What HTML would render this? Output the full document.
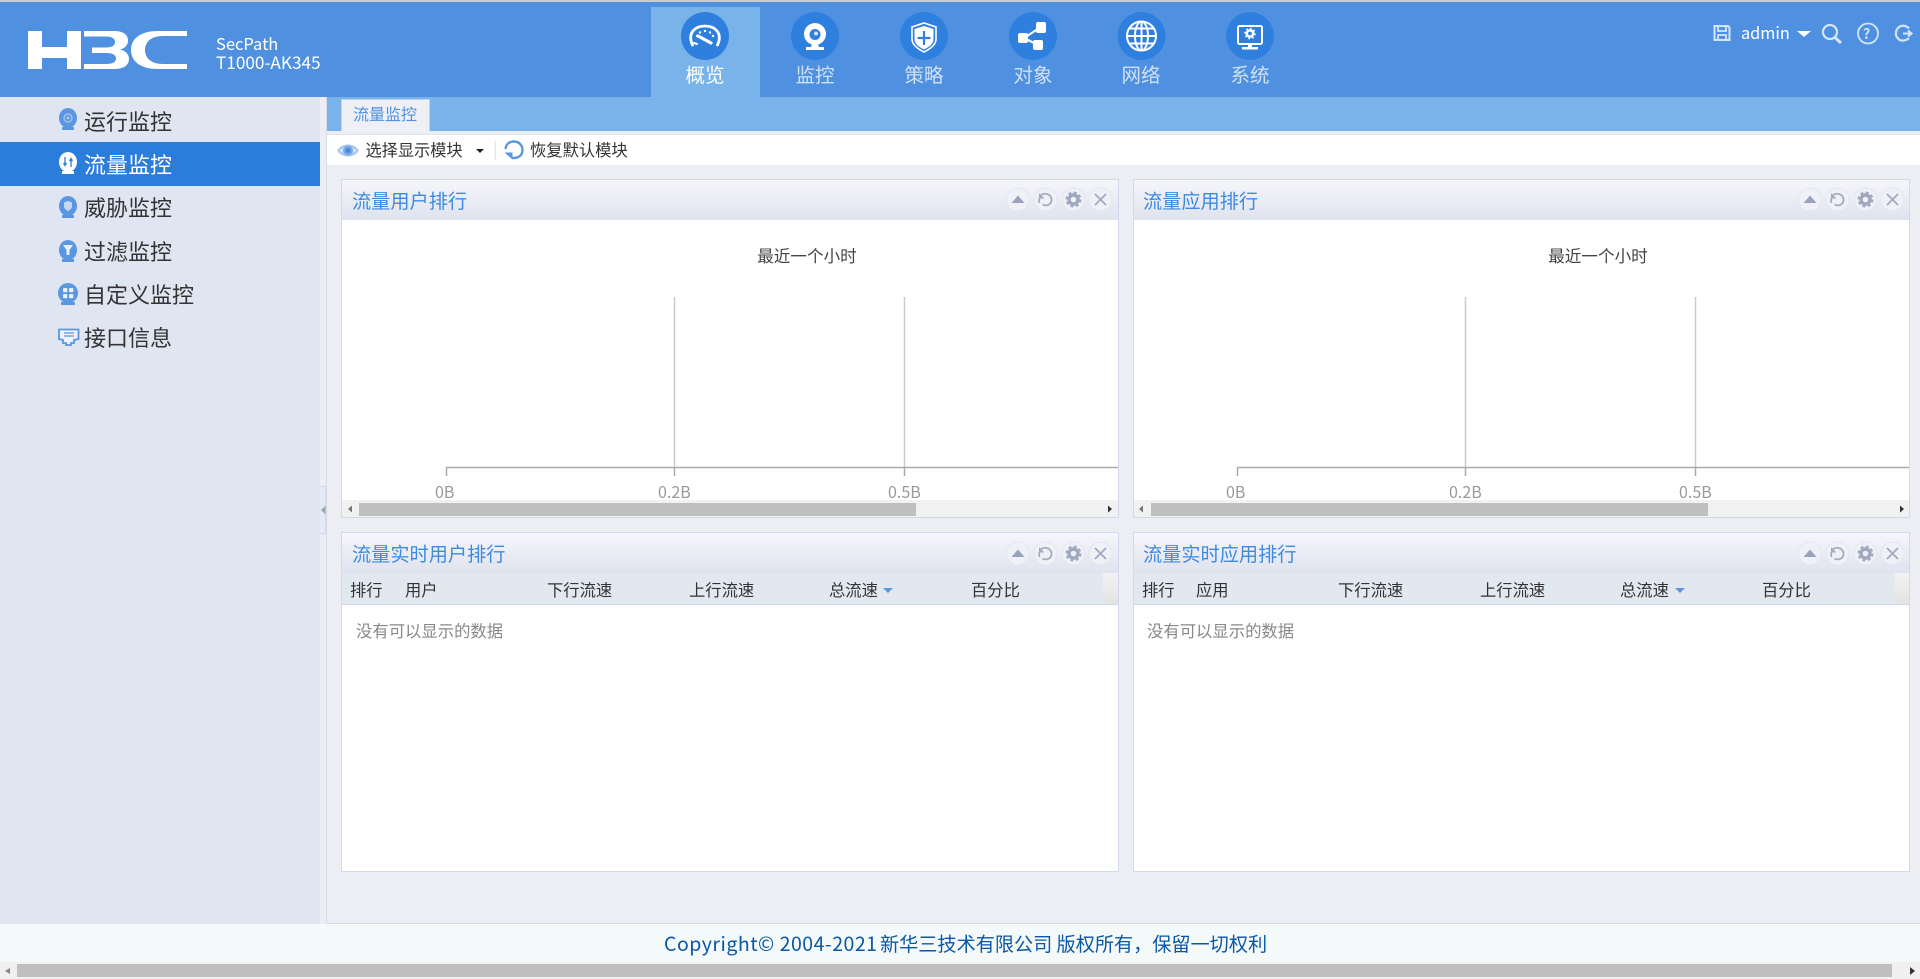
<!DOCTYPE html>
<html lang="zh"><head><meta charset="utf-8"><title>H3C SecPath</title>
<style>
html,body{margin:0;padding:0;width:1920px;height:979px;overflow:hidden;background:#eceef4}
body{position:relative;font-family:"Liberation Sans","Noto Sans CJK SC",sans-serif;color:#333}
div,svg,span{position:absolute;box-sizing:border-box}
.t{white-space:nowrap;line-height:24px;height:24px;font-family:"Noto Sans CJK SC","Liberation Sans",sans-serif}
.nav{font-size:19.5px;color:#cfe0f6;width:100px;text-align:center;top:61.500px}
.side{font-size:22px;left:84px;color:#333}
.p{background:#fff;border:1px solid #d3d9ec}
.h{left:0;right:0;top:0;height:40px;background:linear-gradient(#f6f6fa,#dfe3ee)}
.in{left:0;top:0;width:100%;height:100%}
.p2 .in{left:-1px}
.ti{font-size:19.2px;color:#3d8ae0;left:10px;top:7.500px}
.c{font-size:16.3px;color:#333;top:44px}
.hd{left:0;right:0;top:40px;height:32px;background:#e1e8f0;border-bottom:1px solid #d3d9ec}
.sc{left:0;right:0;top:320px;height:17px;background:#f1f1f1}
.th{left:17px;top:3px;width:557px;height:13px;background:#bfbfbf}
.g{font-size:16px;color:#999;top:299px}
.ct{left:415px;top:62.500px;font-size:16.600px;width:100px;text-align:center;color:#444;white-space:nowrap}
.nd{left:14px;top:85px;font-size:16.350px;color:#888}
</style></head><body>

<div style="left:0;top:0;width:1920px;height:2px;background:#c9ccd0"></div>
<div style="left:0;top:2px;width:1920px;height:95px;background:#4f91e0"></div>

<svg style="left:0;top:0" width="200" height="97" viewBox="0 0 200 97" role="img" aria-label="H3C">
<title>H3C</title>
<g fill="#fff">
<rect x="28" y="31" width="14" height="38"/><rect x="67" y="31" width="14" height="38"/><rect x="40" y="47" width="28" height="11"/>
<path d="M84 31H114C125 31 128 36 128 40.500C128 45 125 48.500 120 49.500C125 50.500 129 54 129 59C129 65 124 69 114 69H84V64H106C113 64 116 62 116 58.500C116 55 113 53 106 53H92V47.500H106C112 47.500 115 45.500 115 42C115 38.500 112 36.500 106 36.500H84Z"/>
<path d="M187 31H158C140 31 131 39 131 50C131 61 140 69 158 69H187V64H163C151 64 145 58 145 50C145 42 151 36 163 36H187Z"/>
</g></svg>
<div class="t" style="left:216px;top:29.500px;font-size:16.500px;color:#fff;line-height:26px">SecPath</div>
<div class="t" style="left:216px;top:48.500px;font-size:17.200px;color:#fff;line-height:26px">T1000-AK345</div>

<div style="left:651px;top:7px;width:109px;height:90px;background:#7ab3ea"></div>
<svg style="left:640px;top:0" width="680" height="97" viewBox="640 0 680 97">
<g fill="#2f80de"><circle cx="705" cy="36" r="24"/><circle cx="815" cy="36" r="24"/><circle cx="924" cy="36" r="24"/><circle cx="1033" cy="36" r="24"/><circle cx="1141.500" cy="36" r="24"/><circle cx="1250" cy="36" r="24"/></g>
<!-- gauge -->
<g fill="none" stroke="#fff" stroke-linecap="round">
<path d="M692.500 45C687 33 695 26 705 26C715 26 723 33 717.500 45" stroke-width="2.800"/>
<g fill="#fff" stroke="none"><circle cx="697" cy="36" r="1.200"/><circle cx="700" cy="32.500" r="1.200"/><circle cx="705" cy="31" r="1.200"/><circle cx="710" cy="32.500" r="1.200"/><circle cx="713" cy="36" r="1.200"/></g>
<path d="M698 36L711 43" stroke-width="3.200"/><path d="M694 43L697 44" stroke-width="2"/>
</g>
<!-- camera -->
<circle cx="815" cy="34" r="11" fill="#fff"/><circle cx="815" cy="34.500" r="5.500" fill="#2f80de"/><circle cx="816" cy="33.500" r="2" fill="#cfe3f8"/>
<path d="M812 44H818L819 47H824V50H806V47H811Z" fill="#fff"/>
<!-- shield -->
<path d="M924 23L936 27V39C936 45 930 49 924 52C918 49 912 45 912 39V27Z" fill="none" stroke="#fff" stroke-width="1.600"/>
<path d="M924 26L933.500 29V39C933.500 44 929 47 924 49.500C919 47 914.500 44 914.500 39V29Z" fill="#fff"/>
<path d="M924 31V45M917.500 38H930.500" stroke="#2f80de" stroke-width="2.200" fill="none"/>
<!-- share -->
<g fill="#fff"><rect x="1018" y="33" width="10" height="10" rx="2"/><rect x="1036" y="22" width="10" height="11" rx="2"/><rect x="1033" y="40" width="10" height="10" rx="2"/></g>
<path d="M1024 38L1041 27M1024 38L1038 45" stroke="#fff" stroke-width="2.200" fill="none"/>
<!-- globe -->
<g fill="none" stroke="#fff" stroke-width="2"><circle cx="1141.500" cy="36" r="14.500"/><ellipse cx="1141.500" cy="36" rx="6.500" ry="14.500"/><path d="M1141.500 21.500V50.500M1127 36H1156M1129 28.500H1154M1129 43.500H1154"/></g>
<!-- monitor -->
<rect x="1238" y="26" width="24" height="18" rx="1.500" fill="none" stroke="#fff" stroke-width="2"/>
<path d="M1248 45H1252V47H1258V49.500H1242V47H1248Z" fill="#fff"/>
<circle cx="1250" cy="33.500" r="3.200" fill="none" stroke="#fff" stroke-width="2.600"/><circle cx="1250" cy="33.500" r="5" fill="none" stroke="#fff" stroke-width="1.600" stroke-dasharray="1.600 2.300"/>
</svg>
<div class="t nav" style="left:655px;color:#fff">概览</div>
<div class="t nav" style="left:765px">监控</div>
<div class="t nav" style="left:874px">策略</div>
<div class="t nav" style="left:983px">对象</div>
<div class="t nav" style="left:1091px">网络</div>
<div class="t nav" style="left:1200px">系统</div>

<svg style="left:1700px;top:0" width="220" height="60" viewBox="1700 0 220 60">
<g fill="none" stroke="#d5e5f8" stroke-width="2">
<path d="M1714.500 26H1728L1729.500 27.500V40H1714.500Z"/><path d="M1718 26.500V31H1726V26.500M1718 40V35H1726V40" stroke-width="1.800"/>
<circle cx="1830" cy="32" r="7" stroke-width="2.200"/><path d="M1835 37.500L1841 43" stroke-width="3"/>
<circle cx="1868" cy="33.500" r="10" stroke-width="1.800"/>
<path d="M1909 28.500C1906 25 1901 25 1898.500 27.500C1895 31 1895 36 1898.500 39C1901 41.500 1906 41 1909 38"  stroke-width="2.200"/><path d="M1903 33.500H1911M1908 30.500L1911.500 33.500L1908 36.500" stroke-width="2"/>
</g>
<path d="M1797 31H1811L1804 37Z" fill="#fff"/>
</svg>
<div class="t" style="left:1741px;top:20px;font-size:16.300px;color:#fff">admin</div>
<div class="t" style="left:1863px;top:22px;font-size:14px;font-weight:bold;color:#d5e5f8">?</div>

<!-- sidebar -->
<div style="left:0;top:97px;width:320px;height:827px;background:#dfe5f1"></div>
<div style="left:320px;top:97px;width:6px;height:827px;background:#eceef4"></div>
<div style="left:326px;top:97px;width:1px;height:827px;background:#d7dcea"></div>
<div style="left:0;top:142px;width:320px;height:44px;background:#2b7ddc"></div>
<svg style="left:50px;top:100px" width="40" height="260" viewBox="50 100 40 260">
<g fill="#5a97e0">
<ellipse cx="68" cy="118" rx="9" ry="10"/><rect x="62" y="127" width="12" height="3"/>
<ellipse cx="68" cy="206" rx="9" ry="10"/><rect x="62" y="215" width="12" height="3"/>
<ellipse cx="68" cy="250" rx="9" ry="10"/><rect x="62" y="259" width="12" height="3"/>
<ellipse cx="68" cy="293" rx="10" ry="10"/><rect x="61" y="302" width="14" height="3"/>
</g>
<g fill="#fff"><ellipse cx="68" cy="162" rx="9" ry="10"/><rect x="62" y="171" width="12" height="3"/></g>
<path d="M65 157V165M63.500 163L65 165.500L66.500 163M71 167V159M69.500 161L71 158.500L72.500 161" stroke="#2b7ddc" stroke-width="1.300" fill="none"/>
<circle cx="68" cy="118" r="4" fill="none" stroke="#a9c9ee" stroke-width="1.200"/><circle cx="68" cy="118" r="1.500" fill="#a9c9ee"/>
<path d="M68 201L72 202.500V206C72 208.500 70 210 68 211C66 210 64 208.500 64 206V202.500Z" fill="#c5d9f3"/>
<path d="M63 245H73L69.500 250V255H66.500V250Z" fill="#e8f0fb"/>
<g fill="#e8f0fb"><rect x="63" y="288" width="4.300" height="4.300" rx="1"/><rect x="69" y="288" width="4.300" height="4.300" rx="1"/><rect x="63" y="294" width="4.300" height="4.300" rx="1"/><rect x="69" y="294" width="4.300" height="4.300" rx="1"/></g>
<path d="M59 329.500H78.500V339L74 340V343H71V345H66V343H63V340L59 339Z" fill="#eef3fb" stroke="#5a97e0" stroke-width="1.800"/>
<path d="M64 333H74M64 336H74" stroke="#5a97e0" stroke-width="1.200"/>
</svg>
<div class="t side" style="top:109px">运行监控</div>
<div class="t side" style="top:152px;color:#fff">流量监控</div>
<div class="t side" style="top:195px">威胁监控</div>
<div class="t side" style="top:239px">过滤监控</div>
<div class="t side" style="top:282px">自定义监控</div>
<div class="t side" style="top:325px">接口信息</div>
<div style="left:320px;top:486px;width:6px;height:48px;background:#e6eaf5;border:1px solid #d3d9ec;border-left:0"></div>
<svg style="left:320px;top:500px" width="6" height="20"><path d="M1 10L5.500 5.500V14.500Z" fill="#9aa"/></svg>

<!-- tab strip -->
<div style="left:327px;top:97px;width:1593px;height:34px;background:#7ab3ea"></div>
<div style="left:341px;top:99px;width:89px;height:32px;background:#eef0f6;border:1px solid #b9d5f3;border-bottom:0"></div>
<div class="t" style="left:353px;top:101px;font-size:16px;color:#4f91e0">流量监控</div>

<!-- toolbar -->
<div style="left:327px;top:134px;width:1593px;height:31px;background:#fff;border-top:1px solid #dfe3ef"></div>
<svg style="left:335px;top:138px" width="200" height="24" viewBox="335 138 200 24">
<path d="M337 150.500C342 142.500 354 142.500 359 150.500C354 158.500 342 158.500 337 150.500Z" fill="#a9c9ee"/>
<path d="M340 150.500C344 146 352 146 356 150.500C352 155 344 155 340 150.500Z" fill="#dbe8f8"/>
<circle cx="348" cy="150.500" r="5" fill="#79a9e6"/><circle cx="348" cy="150.500" r="2.500" fill="#4a86d4"/>
<path d="M476 149H484L480 153Z" fill="#222"/>
<rect x="494.500" y="141" width="1.500" height="19" fill="#e8e8e8"/>
<path d="M505.500 149C506 144 509.500 141.500 514 141.500C519.500 141.500 522.500 146 522.500 150C522.500 155.500 518 158.500 512 158" fill="none" stroke="#5a97e0" stroke-width="2.400"/>
<path d="M504.500 152.500L512.500 152.500L512.500 159.500Z" fill="#5a97e0"/>
</svg>
<div class="t" style="left:365.500px;top:137px;font-size:16.200px">选择显示模块</div>
<div class="t" style="left:530px;top:137px;font-size:16.300px">恢复默认模块</div>

<!-- panel 1 -->
<div class="p" style="left:341px;top:179px;width:778px;height:339px;overflow:hidden"><div class="in">
<div class="h"></div><div class="t ti">流量用户排行</div>
<div class="t ct">最近一个小时</div>
<svg style="left:0;top:0" width="776" height="320" viewBox="0 0 776 320"><path d="M332.500 117V288M562.500 117V288" stroke="#ccc" stroke-width="1.500"/><path d="M104.500 296V287.500H776M332.500 288V296M562.500 288V296" fill="none" stroke="#aaa" stroke-width="1.500"/></svg>
<div class="t g" style="left:93px">0B</div><div class="t g" style="left:316px">0.2B</div><div class="t g" style="left:546px">0.5B</div>
<div class="sc"><div class="th"></div><svg style="left:0;top:0" width="776" height="17"><path d="M10 5.500V12.500L6 9Z" fill="#777"/><path d="M766 5.500V12.500L770 9Z" fill="#333"/></svg></div>
</div></div>

<!-- panel 2 -->
<div class="p p2" style="left:1133px;top:179px;width:777px;height:339px;overflow:hidden"><div class="in">
<div class="h" style="right:-2px"></div><div class="t ti">流量应用排行</div>
<div class="t ct">最近一个小时</div>
<svg style="left:0;top:0" width="778" height="320" viewBox="0 0 778 320"><path d="M332.500 117V288M562.500 117V288" stroke="#ccc" stroke-width="1.500"/><path d="M104.500 296V287.500H778M332.500 288V296M562.500 288V296" fill="none" stroke="#aaa" stroke-width="1.500"/></svg>
<div class="t g" style="left:93px">0B</div><div class="t g" style="left:316px">0.2B</div><div class="t g" style="left:546px">0.5B</div>
<div class="sc" style="right:-2px"><div class="th" style="left:18px"></div><svg style="left:0;top:0" width="778" height="17"><path d="M10 5.500V12.500L6 9Z" fill="#777"/><path d="M767 5.500V12.500L771 9Z" fill="#333"/></svg></div>
</div></div>

<!-- panel 3 -->
<div class="p" style="left:341px;top:532px;width:778px;height:340px;overflow:hidden"><div class="in">
<div class="h"></div><div class="t ti" style="top:8px">流量实时用户排行</div>
<div class="hd"><div style="right:0;top:0;width:15px;height:31px;background:linear-gradient(#f2f2f2,#e3e3e3)"></div></div>
<div class="t c" style="left:8px">排行</div><div class="t c" style="left:63px">用户</div><div class="t c" style="left:205px">下行流速</div><div class="t c" style="left:347px">上行流速</div><div class="t c" style="left:487px">总流速</div><div class="t c" style="left:629px">百分比</div>
<svg style="left:540px;top:54px" width="12" height="8"><path d="M1 1H11L6 6Z" fill="#5b93dc"/></svg>
<div class="t nd">没有可以显示的数据</div>
</div></div>

<!-- panel 4 -->
<div class="p p2" style="left:1133px;top:532px;width:777px;height:340px;overflow:hidden"><div class="in">
<div class="h" style="right:-2px"></div><div class="t ti" style="top:8px">流量实时应用排行</div>
<div class="hd" style="right:-2px"><div style="right:0;top:0;width:15px;height:31px;background:linear-gradient(#f2f2f2,#e3e3e3)"></div></div>
<div class="t c" style="left:9px">排行</div><div class="t c" style="left:63px">应用</div><div class="t c" style="left:205px">下行流速</div><div class="t c" style="left:347px">上行流速</div><div class="t c" style="left:487px">总流速</div><div class="t c" style="left:629px">百分比</div>
<svg style="left:541px;top:54px" width="12" height="8"><path d="M1 1H11L6 6Z" fill="#5b93dc"/></svg>
<div class="t nd">没有可以显示的数据</div>
</div></div>

<!-- panel buttons -->
<svg style="left:0;top:0;pointer-events:none" width="1920" height="600" viewBox="0 0 1920 600">
<defs><g id="bt"><g fill="#f0f1f7" stroke="#e3e5f0"><circle cx="0" cy="0" r="11.500"/><circle cx="27.500" cy="0" r="11.500"/><circle cx="55.500" cy="0" r="11.500"/><circle cx="82.500" cy="0" r="11.500"/></g>
<path d="M-6.500 3.500H6.500L0-4Z" fill="#9aa3bd"/>
<path d="M23 -4.500C28 -7.500 34 -4.500 33.500 1C33 5.500 28 7 24.500 5M21.500 -1.500C21 0 21 2 21.500 3.500" fill="none" stroke="#a4abc0" stroke-width="1.800"/><path d="M21 -6.500V-1H26.500Z" fill="#a4abc0"/>
<circle cx="55.500" cy="0" r="4.500" fill="none" stroke="#a0a8c0" stroke-width="3.400"/><circle cx="55.500" cy="0" r="7" fill="none" stroke="#a0a8c0" stroke-width="2" stroke-dasharray="3 2.500"/>
<path d="M77 -5.500L88 5.500M88 -5.500L77 5.500" stroke="#a4abc0" stroke-width="1.900"/></g></defs>
<use href="#bt" x="1018" y="199.500"/><use href="#bt" x="1810" y="199.500"/>
<use href="#bt" x="1018" y="553.500"/><use href="#bt" x="1810" y="553.500"/>
</svg>

<!-- footer -->
<div style="left:327px;top:923px;width:1593px;height:1px;background:#d3d9ec"></div>
<div style="left:0;top:924px;width:1920px;height:38px;background:#f4fafa"></div>
<div class="t" style="left:664px;top:931px;font-size:19.500px;letter-spacing:.5px;color:#0b57a4">Copyright© 2004-2021</div>
<div class="t" style="left:880px;top:931px;font-size:19.150px;color:#0b57a4">新华三技术有限公司 版权所有，保留一切权利</div>
<div style="left:0;top:962px;width:1920px;height:17px;background:#f0f0f0"></div>
<div style="left:17px;top:964px;width:1875px;height:13px;background:#bfbfbf"></div>
<svg style="left:0;top:962px" width="1920" height="17"><path d="M10 6V12L5 9Z" fill="#888"/><path d="M1910 5V13L1915 9Z" fill="#333"/></svg>
</body></html>
